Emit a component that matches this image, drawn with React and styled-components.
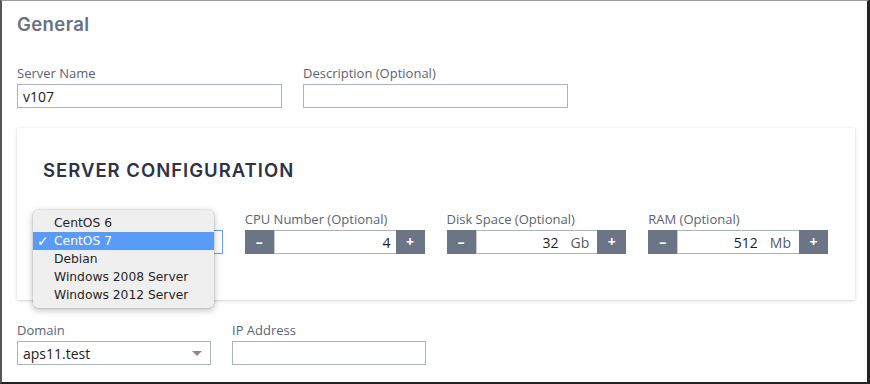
import React from "react";
import styled, { createGlobalStyle } from "styled-components";

const GlobalStyle = createGlobalStyle`
  body {
    margin: 0;
    background: #ffffff;
    font-family: "Open Sans", "Liberation Sans", sans-serif;
  }
`;

const Frame = styled.div`
  width: 870px;
  height: 384px;
  box-sizing: border-box;
  border-top: 1px solid #9a9a9a;
  border-left: 2px solid #555555;
  border-right: 3px solid #222222;
  border-bottom: 2px solid #222222;
  padding: 11px 12px 0 15px;
  background: #ffffff;
  overflow: hidden;
`;

const Title = styled.h2`
  margin: 0;
  font-family: "Inter", "Open Sans", sans-serif;
  font-weight: 600;
  font-size: 18.5px;
  line-height: 24px;
  letter-spacing: 0.4px;
  color: #687183;
`;

const Row = styled.div`
  display: grid;
  grid-template-columns: ${(p) => p.$col}px ${(p) => p.$col}px;
  column-gap: 21px;
  margin-top: ${(p) => p.$top}px;
`;

const Field = styled.div`
  position: relative;
  display: flex;
  flex-direction: column;
`;

const Label = styled.label`
  height: 17px;
  font-size: 13px;
  line-height: 17px;
  color: #5c6472;
  margin-bottom: 2px;
  white-space: nowrap;
`;

const TextBox = styled.div`
  height: 24px;
  box-sizing: border-box;
  border: 1px solid ${(p) => (p.$focus ? "#6d9fe6" : "#aab3c0")};
  display: flex;
  align-items: center;
  padding: 0 8px 0 5px;
  font-size: 14px;
  color: #222222;
  background: #ffffff;
`;

const SelectText = styled.span`
  flex: 1;
`;

const Caret = styled.span`
  width: 0;
  height: 0;
  border-left: 5px solid transparent;
  border-right: 5px solid transparent;
  border-top: 5px solid #8c8c8c;
`;

const Card = styled.section`
  margin-top: 20px;
  padding: 30px 27px 46px 26px;
  background: #ffffff;
  box-shadow: 0 1px 3px rgba(0, 0, 0, 0.16), 0 0 1px rgba(0, 0, 0, 0.08);
`;

const CardTitle = styled.h3`
  margin: 0 0 29px;
  font-family: "Inter", "Open Sans", sans-serif;
  font-weight: 600;
  font-size: 18.5px;
  line-height: 24px;
  letter-spacing: 1px;
  color: #2e3245;
`;

const ConfigGrid = styled.div`
  display: grid;
  grid-template-columns: repeat(4, 1fr);
  column-gap: 22px;
`;

const Stepper = styled.div`
  display: flex;
  height: 24px;
`;

const StepButton = styled.button`
  width: 29px;
  flex: none;
  border: none;
  padding: 0;
  background: #6b7586;
  color: #ffffff;
  font-family: "Open Sans", sans-serif;
  font-weight: 700;
  font-size: 14px;
  line-height: 24px;
  cursor: pointer;
`;

const StepValue = styled.div`
  flex: 1;
  min-width: 0;
  box-sizing: border-box;
  border: 1px solid #aab3c0;
  border-left-color: #c3cad4;
  border-right: none;
  display: flex;
  align-items: center;
  justify-content: flex-end;
  padding-right: 5px;
  font-size: 14px;
  color: #222222;
  background: #ffffff;
`;

const Unit = styled.span`
  margin-left: 12px;
  padding-right: 3px;
  color: #555b66;
`;

const Menu = styled.ul`
  position: absolute;
  top: -1px;
  left: -10px;
  width: 181px;
  margin: 0;
  padding: 4px 0;
  list-style: none;
  background: #efefef;
  border-radius: 5px;
  box-shadow: 0 2px 7px rgba(0, 0, 0, 0.28), 0 0 0 0.5px rgba(0, 0, 0, 0.12);
  z-index: 2;
`;

const MenuItem = styled.li`
  position: relative;
  height: 18px;
  line-height: 18px;
  padding-left: 21px;
  font-family: "DejaVu Sans", "Liberation Sans", sans-serif;
  font-size: 12.3px;
  color: ${(p) => (p.$active ? "#ffffff" : "#262626")};
  background: ${(p) => (p.$active ? "#5a9bf8" : "transparent")};
`;

const Check = styled.span`
  position: absolute;
  left: 4px;
  top: 0;
  font-size: 14px;
`;

const osOptions = [
  "CentOS 6",
  "CentOS 7",
  "Debian",
  "Windows 2008 Server",
  "Windows 2012 Server",
];

const steppers = [
  { label: "CPU Number (Optional)", value: "4" },
  { label: "Disk Space (Optional)", value: "32", unit: "Gb" },
  { label: "RAM (Optional)", value: "512", unit: "Mb" },
];

const NumberField = ({ label, value, unit }) => (
  <Field>
    <Label>{label}</Label>
    <Stepper>
      <StepButton>–</StepButton>
      <StepValue>
        {value}
        {unit && <Unit>{unit}</Unit>}
      </StepValue>
      <StepButton>+</StepButton>
    </Stepper>
  </Field>
);

const App = () => {
  return (
    <>
      <GlobalStyle />
      <Frame>
        <Title>General</Title>
        <Row $col={265} $top={29}>
          <Field>
            <Label>Server Name</Label>
            <TextBox>v107</TextBox>
          </Field>
          <Field>
            <Label>Description (Optional)</Label>
            <TextBox />
          </Field>
        </Row>

        <Card>
          <CardTitle>SERVER CONFIGURATION</CardTitle>
          <ConfigGrid>
            {/* OS select is open: its label and value sit under the menu */}
            <Field aria-label="Operating System">
              <Label />
              <TextBox $focus>
                <SelectText />
                <Caret />
              </TextBox>
              <Menu>
                {osOptions.map((os) => (
                  <MenuItem key={os} $active={os === "CentOS 7"}>
                    {os === "CentOS 7" && <Check>✓</Check>}
                    {os}
                  </MenuItem>
                ))}
              </Menu>
            </Field>
            {steppers.map((s) => (
              <NumberField key={s.label} {...s} />
            ))}
          </ConfigGrid>
        </Card>

        <Row $col={194} $top={22}>
          <Field>
            <Label>Domain</Label>
            <TextBox>
              <SelectText>aps11.test</SelectText>
              <Caret />
            </TextBox>
          </Field>
          <Field>
            <Label>IP Address</Label>
            <TextBox />
          </Field>
        </Row>
      </Frame>
    </>
  );
};

export default App;
